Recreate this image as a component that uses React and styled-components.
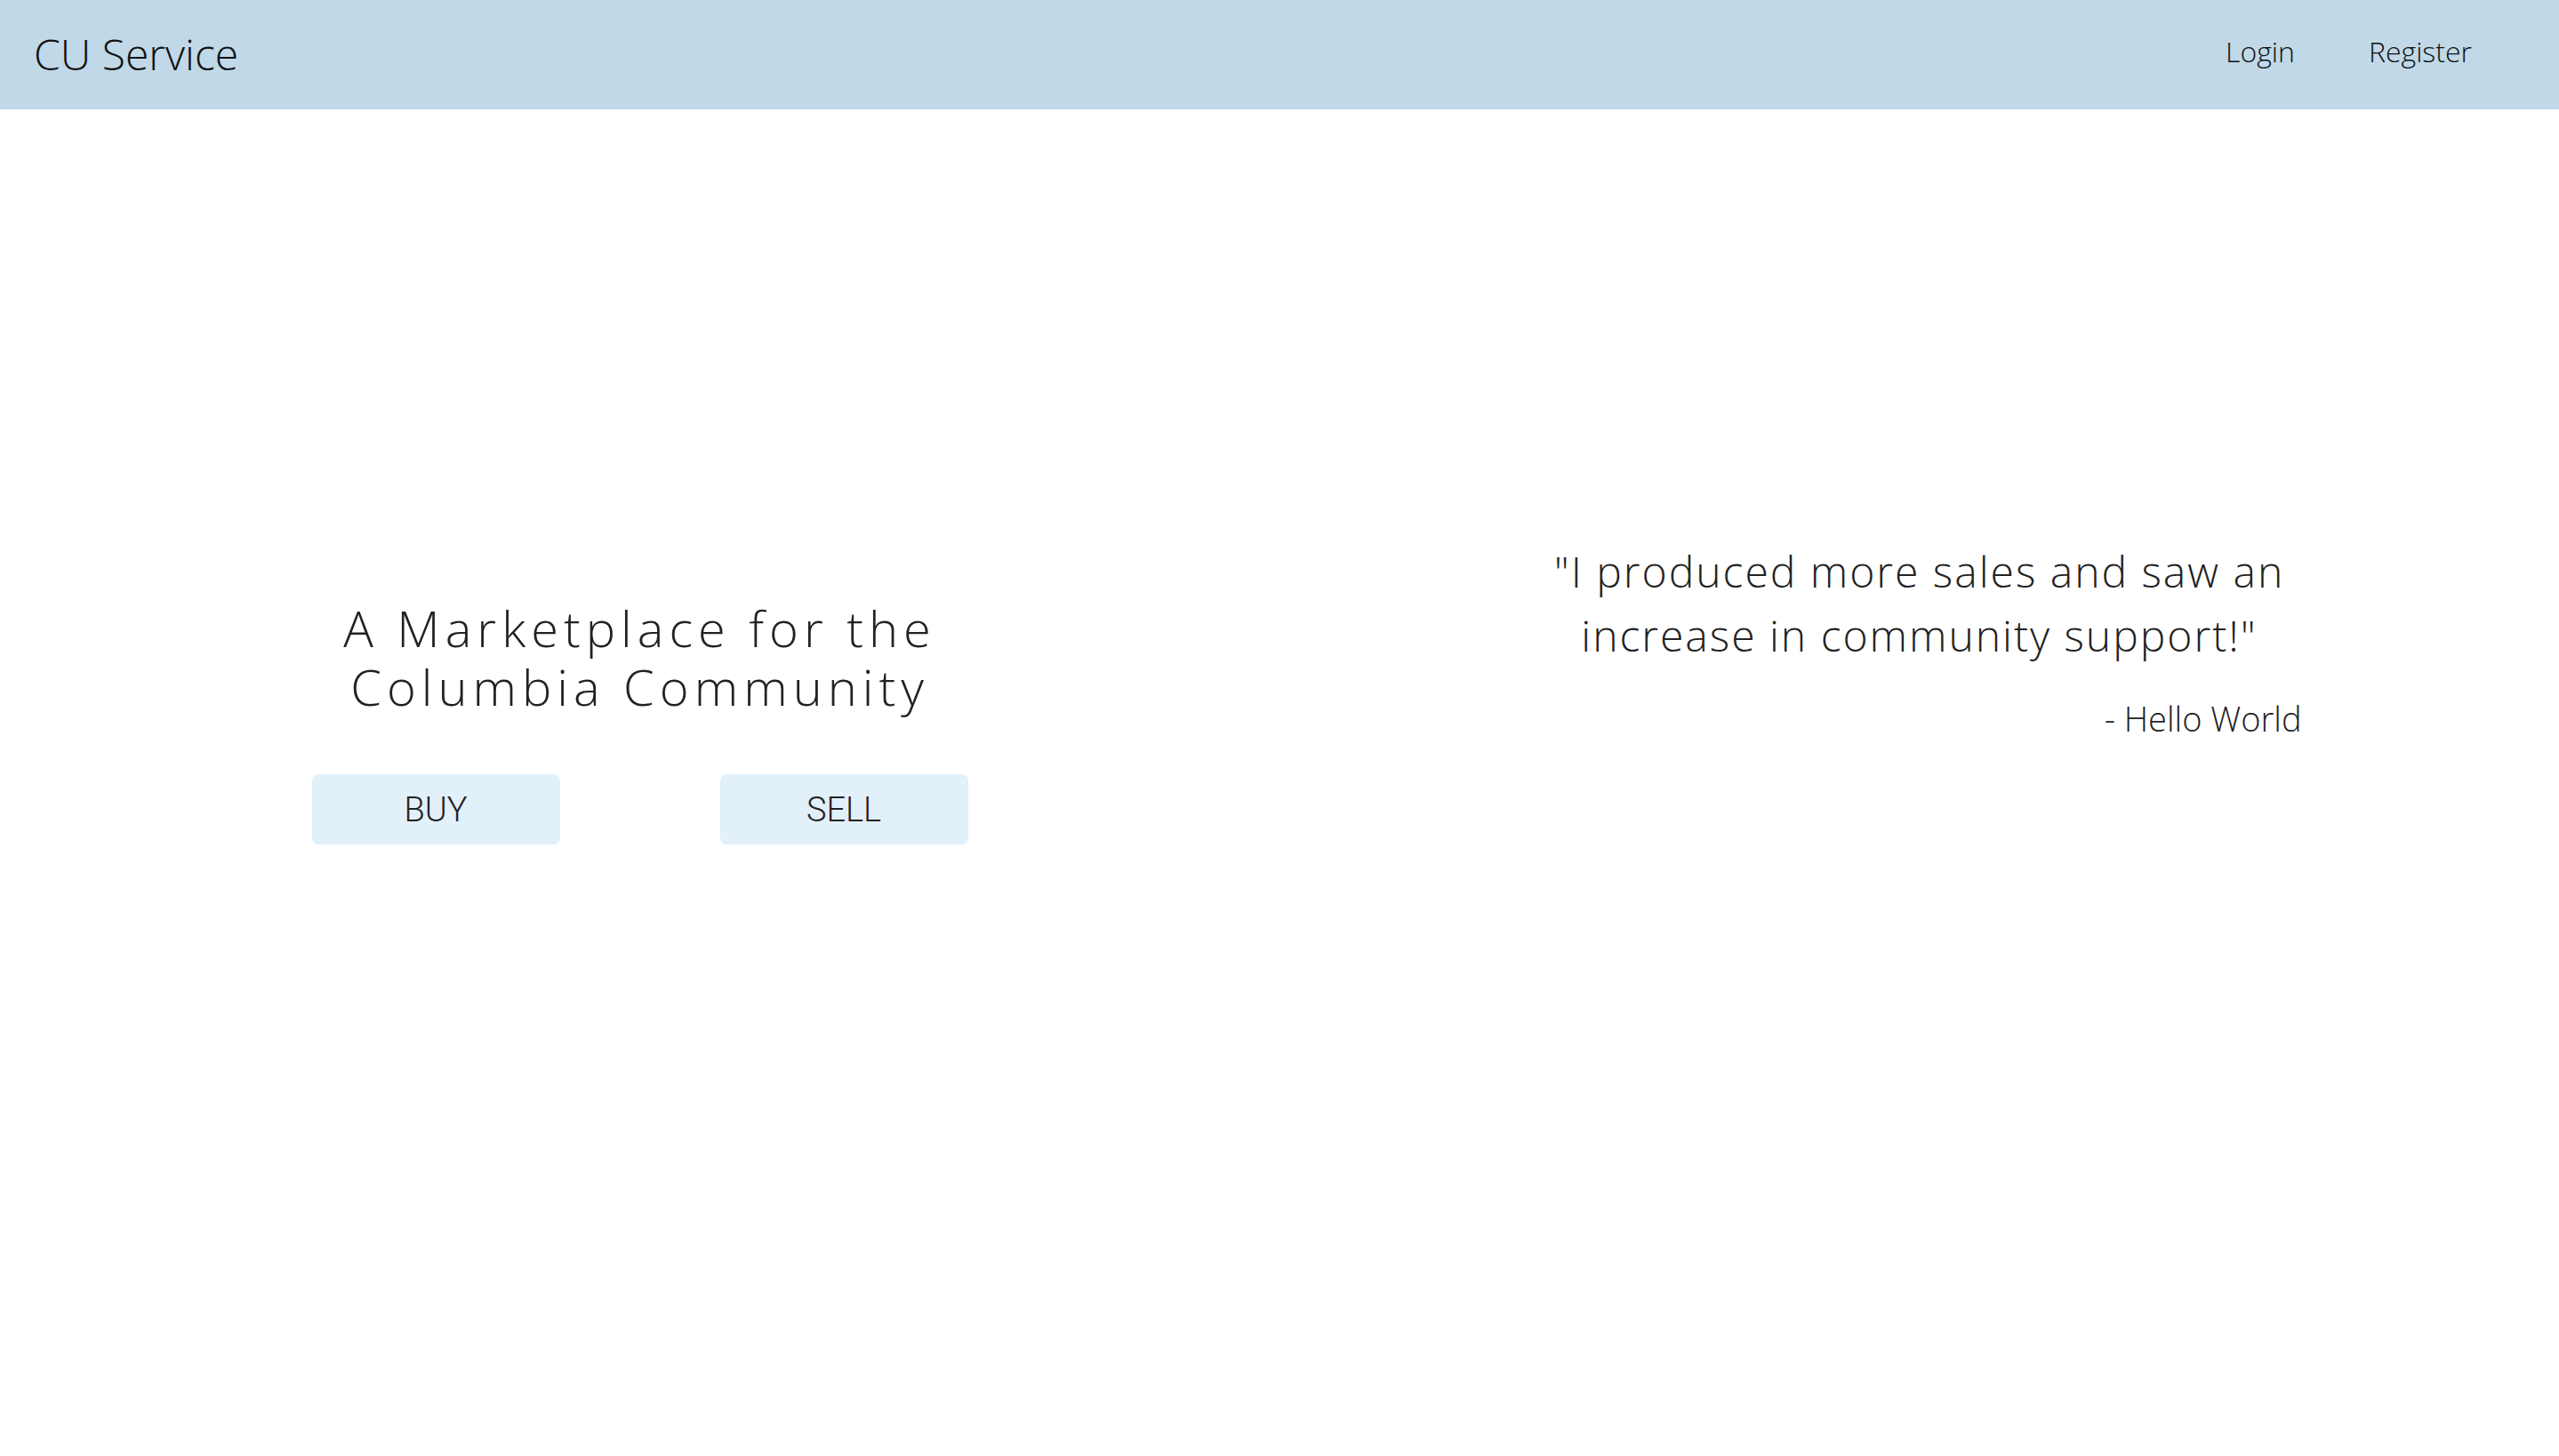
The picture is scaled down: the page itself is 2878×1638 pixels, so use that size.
import React from "react";
import styled, { createGlobalStyle } from "styled-components";

const Global = createGlobalStyle`
  html, body { margin: 0; padding: 0; background: #ffffff; }
  body { font-family: "Open Sans", "Liberation Sans", sans-serif; font-weight: 300; color: #1f2328; }
  * { box-sizing: border-box; }
`;

const Page = styled.div`
  width: 100%;
  min-height: 1638px;
  display: flex;
  flex-direction: column;
`;

const NavBar = styled.header`
  height: 123px;
  background: #c0d8e7;
  display: flex;
  align-items: center;
  justify-content: space-between;
  padding: 0 98px 0 38px;
`;

const Brand = styled.div`
  font-size: 48px;
  font-weight: 300;
  color: #111;
  margin-top: -2px;
`;

const NavLinks = styled.nav`
  display: flex;
  align-items: center;
  gap: 83px;
`;

const NavLink = styled.a`
  font-size: 32px;
  font-weight: 300;
  color: #111;
  text-decoration: none;
  margin-top: -9px;
`;

const Main = styled.main`
  display: grid;
  grid-template-columns: 1fr 1fr;
`;

const Column = styled.section`
  display: flex;
  flex-direction: column;
  align-items: center;
  padding-top: ${(p) => p.$top}px;
`;

const Heading = styled.h1`
  margin: 0;
  font-size: 56px;
  font-weight: 300;
  line-height: 66px;
  letter-spacing: 6px;
  text-align: center;
  color: #222;
`;

const ButtonRow = styled.div`
  display: flex;
  gap: 180px;
  margin-top: 66px;
`;

const ActionButton = styled.button`
  width: 279px;
  height: 79px;
  border: none;
  border-radius: 7px;
  background: #e2f0fa;
  font-family: Roboto, "Liberation Sans", sans-serif;
  font-weight: 300;
  font-size: 38px;
  color: #222;
  cursor: pointer;
  display: flex;
  align-items: center;
  justify-content: center;
  padding: 0;
`;

const Quote = styled.blockquote`
  margin: 0;
  width: 860px;
  display: flex;
  flex-direction: column;
`;

const QuoteText = styled.p`
  margin: 0;
  font-size: 48px;
  font-weight: 300;
  line-height: 72px;
  letter-spacing: 2px;
  text-align: center;
  color: #222;
`;

const Attribution = styled.p`
  margin: 31px 0 0;
  font-size: 38px;
  font-weight: 300;
  text-align: right;
  color: #222;
`;

export default function App() {
  return (
    <>
      <Global />
      <Page>
        <NavBar>
          <Brand>CU Service</Brand>
          <NavLinks>
            <NavLink href="#">Login</NavLink>
            <NavLink href="#">Register</NavLink>
          </NavLinks>
        </NavBar>
        <Main>
          <Column $top={550}>
            <Heading>
              A Marketplace for the
              <br />
              Columbia Community
            </Heading>
            <ButtonRow>
              <ActionButton>BUY</ActionButton>
              <ActionButton>SELL</ActionButton>
            </ButtonRow>
          </Column>
          <Column $top={484}>
            <Quote>
              <QuoteText>
                "I produced more sales and saw an
                <br />
                increase in community support!"
              </QuoteText>
              <Attribution>- Hello World</Attribution>
            </Quote>
          </Column>
        </Main>
      </Page>
    </>
  );
}
